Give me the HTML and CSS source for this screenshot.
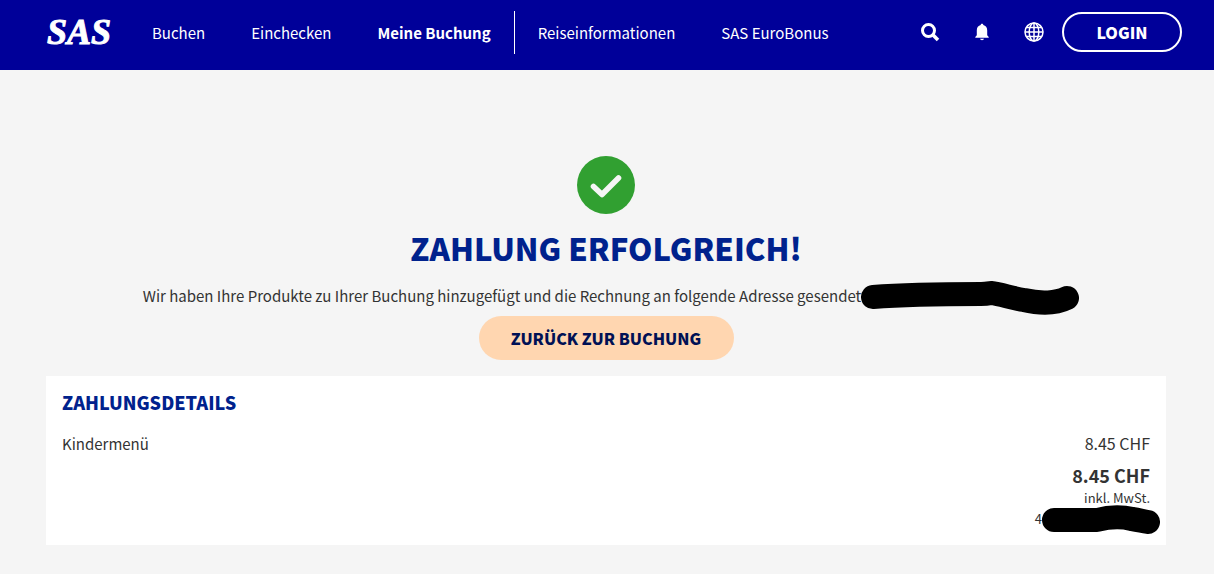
FILE: index.html
```html
<!DOCTYPE html>
<html lang="de">
<head>
    <meta charset="UTF-8">
    <meta name="viewport" content="width=device-width, initial-scale=1.0">
    <title>SAS - Zahlung erfolgreich</title>
    <link rel="stylesheet" href="styles.css">
</head>
<body>
    <header class="topbar">
        <a href="#" class="logo" aria-label="SAS">
            <svg width="68" height="42" viewBox="0 0 68 42">
                <text x="1" y="33">SAS</text>
            </svg>
        </a>
        <nav class="menu">
            <a href="#">Buchen</a>
            <a href="#">Einchecken</a>
            <a href="#" class="active">Meine Buchung</a>
            <a href="#">Reiseinformationen</a>
            <a href="#">SAS EuroBonus</a>
        </nav>
        <div class="tools">
            <button type="button" class="icon" aria-label="Suche">
                <svg width="20" height="20" viewBox="0 0 20 20" fill="none" stroke="currentColor">
                    <circle cx="8.5" cy="8.5" r="6" stroke-width="3"/>
                    <path d="M12.8 12.8L18 18" stroke-width="3.6"/>
                </svg>
            </button>
            <button type="button" class="icon" aria-label="Mitteilungen">
                <svg width="14" height="18" viewBox="0 0 14 18" fill="currentColor">
                    <path d="M7 .8c.8 0 1.3.5 1.3 1.2 2.4.6 3.9 2.5 3.9 5.2v5l1.5 1.7v.9H.3v-.9l1.5-1.7v-5C1.8 4.5 3.3 2.6 5.700 2 5.700 1.300 6.200.8 7 .8z"/>
                    <path d="M5 15.8h4c-.2.9-1 1.4-2 1.4s-1.8-.5-2-1.400z"/>
                </svg>
            </button>
            <button type="button" class="icon" aria-label="Sprache">
                <svg width="20" height="20" viewBox="0 0 20 20" fill="none" stroke="currentColor" stroke-width="1.5">
                    <circle cx="10" cy="10" r="9"/>
                    <ellipse cx="10" cy="10" rx="4.8" ry="9"/>
                    <path d="M10 1v18M1 10h18M2.5 5.5h15M2.5 14.5h15"/>
                </svg>
            </button>
            <button type="button" class="login">LOGIN</button>
        </div>
    </header>

    <main>
        <section class="confirmation">
            <svg class="check" width="58" height="58" viewBox="0 0 58 58">
                <circle cx="29" cy="29" r="29" fill="#31a031"/>
                <path d="M16.5 30.5L25 38.5L41.5 22" fill="none" stroke="#f5f5f5" stroke-width="5.6" stroke-linecap="round" stroke-linejoin="round"/>
            </svg>
            <h1>ZAHLUNG ERFOLGREICH!</h1>
            <p>Wir haben Ihre Produkte zu Ihrer Buchung hinzugefügt und die Rechnung an folgende Adresse gesendet<svg class="mark" width="218" height="34" viewBox="0 0 218 34">
                <path d="M12 16C50 13 80 13 120 13C128 13 128 12 130 12C140 13 150 17 163 19C180 23 196 22 206 17" />
            </svg></p>
            <a href="#" class="back">ZURÜCK ZUR BUCHUNG</a>
        </section>

        <section class="details">
            <h2>ZAHLUNGSDETAILS</h2>
            <div class="row">
                <span>Kindermenü</span>
                <span class="amount">8.45 CHF</span>
            </div>
            <div class="total">
                <strong>8.45 CHF</strong>
                <small>inkl. MwSt.</small>
                <small>4<svg class="mark" width="118" height="30" viewBox="0 0 118 30">
                    <path d="M12 15H55C70 11 82 12 90 14C97 15 100 16 106 17" />
                </svg></small>
            </div>
        </section>
    </main>
</body>
</html>
```
FILE: styles.css
```css
* {
    box-sizing: border-box;
}

body {
    margin: 0;
    color: #333;
    background-color: #f5f5f5;
    font-family: "Noto Sans CJK SC", "Open Sans", sans-serif;
    font-size: 15px;
    line-height: 24px;
}

a {
    color: inherit;
    text-decoration: none;
}

button {
    padding: 0;
    border: none;
    color: inherit;
    background: none;
    font: inherit;
    cursor: pointer;
}

svg {
    flex: none;
}

/* Header */
.topbar {
    display: flex;
    align-items: center;
    height: 70px;
    padding: 0 32px 6px 46px;
    color: #fff;
    background-color: #000099;
}

.logo {
    display: flex;
    margin-right: 15px;
}

.logo text {
    fill: #fff;
    stroke: #fff;
    stroke-width: 1px;
    font: italic bold 36px "Liberation Serif", serif;
}

.menu {
    display: flex;
    align-items: center;
}

.menu a {
    padding: 0 23px;
    line-height: 43px;
    white-space: nowrap;
}

.menu .active {
    border-right: 1px solid #fff;
    font-weight: bold;
}

.tools {
    display: flex;
    align-items: center;
    margin-left: auto;
}

.icon {
    display: flex;
    align-items: center;
    justify-content: center;
    width: 52px;
    height: 40px;
}

.login {
    width: 120px;
    height: 40px;
    margin-left: 2px;
    border: 2px solid #fff;
    border-radius: 20px;
    font-size: 16px;
    font-weight: 900;
    line-height: 34px;
}

/* Content */
main {
    padding: 86px 48px 30px 46px;
}

.confirmation {
    display: flex;
    flex-direction: column;
    align-items: center;
    text-align: center;
}

h1 {
    margin: 14px 0;
    color: #00228d;
    font-size: 31px;
    font-weight: 900;
    line-height: 40px;
}

.confirmation p {
    margin: 2px 0 8px;
}

/* Blacked-out data */
.mark {
    margin: -10px -10px -10px 0;
    vertical-align: middle;
}

.mark path {
    fill: none;
    stroke: #000;
    stroke-width: 24px;
    stroke-linecap: round;
    stroke-linejoin: round;
}

.back {
    min-width: 255px;
    padding: 0 32px;
    border-radius: 22px;
    color: #001155;
    background-color: #ffd6b0;
    font-size: 16px;
    font-weight: 900;
    line-height: 44px;
}

.details {
    margin-top: 16px;
    padding: 14px 16px 16px;
    background-color: #fff;
}

h2 {
    margin: 0 0 17px;
    color: #00228d;
    font-size: 18px;
    font-weight: 900;
    line-height: 24px;
}

.row {
    display: flex;
    align-items: baseline;
    justify-content: space-between;
}

.amount {
    font-size: 16px;
}

.total {
    display: flex;
    flex-direction: column;
    align-items: flex-end;
    margin-top: 7px;
}

.total strong {
    font-size: 18px;
}

.total small {
    font-size: 13px;
    line-height: 21px;
}
```
